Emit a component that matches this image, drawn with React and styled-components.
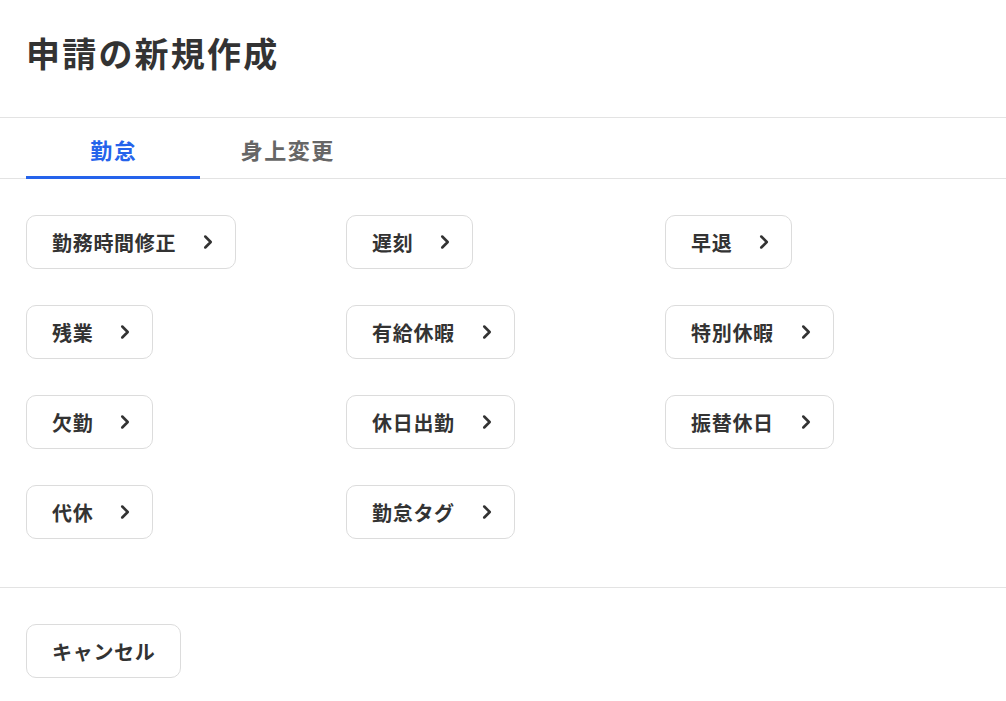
import React, { useState } from "react";
import styled, { createGlobalStyle } from "styled-components";
import { ChevronRight } from "lucide-react";

const GlobalStyle = createGlobalStyle`
  body {
    margin: 0;
    background: #fff;
    font-family: "Noto Sans CJK JP", "Noto Sans", sans-serif;
    color: #333;
  }
`;

const tabs = ["勤怠", "身上変更"];

const items = [
  "勤務時間修正", "遅刻", "早退",
  "残業", "有給休暇", "特別休暇",
  "欠勤", "休日出勤", "振替休日",
  "代休", "勤怠タグ",
];

const App = () => {
  const [active, setActive] = useState(0);

  return (
    <>
      <GlobalStyle />
      <Wrapper>
        <Header>
          <Title>申請の新規作成</Title>
        </Header>

        <TabBar>
          {tabs.map((t, i) => (
            <Tab key={t} active={i === active} onClick={() => setActive(i)}>
              {t}
            </Tab>
          ))}
        </TabBar>

        <Grid>
          {items.map((label) => (
            <Cell key={label}>
              <TypeButton>
                <Label>{label}</Label>
                <ChevronRight size={22} strokeWidth={2.8} />
              </TypeButton>
            </Cell>
          ))}
        </Grid>

        <Footer>
          <CancelButton>キャンセル</CancelButton>
        </Footer>
      </Wrapper>
    </>
  );
};

const Wrapper = styled.div`
  width: 1006px;
  min-height: 701px;
  background: #fff;
`;

const Header = styled.div`
  height: 118px;
  display: flex;
  align-items: center;
  padding: 0 26px 12px;
  box-sizing: border-box;
  border-bottom: 1px solid #e3e3e3;
`;

const Title = styled.h1`
  margin: 0;
  font-size: 34px;
  font-weight: 700;
  color: #333;
  letter-spacing: 2.2px;
`;

const TabBar = styled.div`
  display: flex;
  padding: 0 26px;
  height: 60px;
  border-bottom: 1px solid #e3e3e3;
`;

const Tab = styled.div`
  width: 174px;
  display: flex;
  align-items: center;
  justify-content: center;
  padding-top: 3px;
  font-size: 22px;
  font-weight: 700;
  letter-spacing: 1.5px;
  text-indent: 1.5px;
  color: ${(p) => (p.active ? "#2563eb" : "#666")};
  border-bottom: 3px solid ${(p) => (p.active ? "#2563eb" : "transparent")};
  margin-bottom: -1px;
  cursor: pointer;
`;

const Grid = styled.div`
  display: grid;
  grid-template-columns: 320px 319px 1fr;
  row-gap: 36px;
  padding: 36px 26px 48px;
  border-bottom: 1px solid #e3e3e3;
`;

const Cell = styled.div`
  display: flex;
`;

const TypeButton = styled.button`
  display: inline-flex;
  align-items: center;
  gap: 21px;
  height: 54px;
  padding: 0 16px 0 25px;
  background: #fff;
  border: 1px solid #dcdcdc;
  border-radius: 10px;
  font-family: inherit;
  font-size: 20px;
  font-weight: 700;
  color: #333;
  cursor: pointer;

  svg {
    color: #333;
  }
`;

const Label = styled.span`
  letter-spacing: 0.7px;
`;

const Footer = styled.div`
  padding: 36px 26px;
`;

const CancelButton = styled.button`
  height: 54px;
  padding: 0 24px 0 25px;
  background: #fff;
  border: 1px solid #dcdcdc;
  border-radius: 10px;
  font-family: inherit;
  font-size: 20px;
  font-weight: 700;
  letter-spacing: 0.7px;
  color: #333;
  cursor: pointer;
`;

export default App;
